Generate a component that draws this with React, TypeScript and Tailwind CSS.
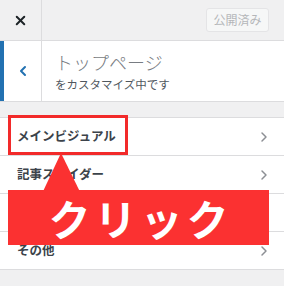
import React from 'react';
import { X, ChevronLeft, ChevronRight } from 'lucide-react';

const items = ['メインビジュアル', '記事スライダー', '', 'その他'];

export default function App() {
  return (
    <div
      className="relative w-[284px] h-[286px] overflow-hidden bg-[#f0f0f1] text-[#1d2327]"
      style={{ fontFamily: '"Noto Sans CJK JP", "Noto Sans", sans-serif' }}
    >
      {/* Top bar */}
      <div className="flex h-[41px] border-b border-[#dcdcde]">
        <div className="flex w-[42px] items-center justify-center border-r border-[#dcdcde]">
          <X className="h-[15px] w-[15px] text-[#1d2327]" strokeWidth={3.2} />
        </div>
        <div className="flex flex-1 items-center justify-end pr-[15px]">
          <div className="flex h-[24px] w-[63px] items-center justify-center rounded-[3px] border border-[#e4e4e6] bg-[#f6f7f7] text-[12px] text-[#b4b6b9]">
            公開済み
          </div>
        </div>
      </div>

      {/* Section header */}
      <div className="flex h-[61px] border-b border-[#dcdcde] bg-white">
        <div className="flex w-[42px] items-center justify-center border-l-[4px] border-r border-l-[#2271b1] border-r-[#dcdcde]">
          <ChevronLeft className="h-[16px] w-[16px] text-[#2271b1]" strokeWidth={3} />
        </div>
        <div className="flex flex-col justify-center pl-[13px]">
          <div className="text-[18px] font-light leading-[24px] text-[#787c82]">トップページ</div>
          <div className="mt-[2px] text-[11.5px] leading-[16px] text-[#50575e]">をカスタマイズ中です</div>
        </div>
      </div>

      {/* List */}
      <ul className="mt-[15px] border-t border-[#dcdcde] bg-white">
        {items.map((label, i) => (
          <li key={i} className="flex h-[38px] items-center justify-between border-b border-[#dcdcde] pl-[17px] pr-[12px]">
            <span className="text-[12.5px] font-bold text-[#3c434a]">{label}</span>
            <ChevronRight className="h-[16px] w-[16px] text-[#8c8f94]" strokeWidth={2.2} />
          </li>
        ))}
      </ul>

      {/* Annotation overlay */}
      <div className="absolute left-[8px] top-[115px] h-[40px] w-[120px] border-[3px] border-[#f22a2a]" />
      <svg className="absolute left-0 top-0" width="284" height="286">
        <polygon points="61,153 39,200 84,200" fill="#fb3131" />
      </svg>
      <div className="absolute left-[8px] top-[190px] flex h-[55px] w-[261px] items-center justify-center bg-[#fb3131]">
        <span className="pl-[4px] text-[42px] font-bold leading-none tracking-[4px] text-white">クリック</span>
      </div>
    </div>
  );
}
